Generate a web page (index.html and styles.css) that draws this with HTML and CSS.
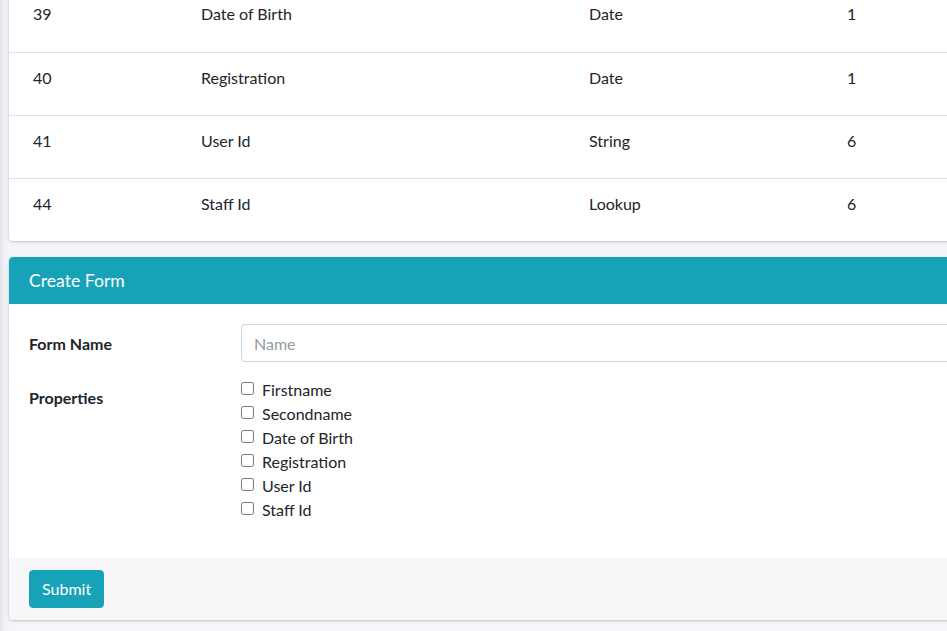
FILE: index.html
```html
<!DOCTYPE html>
<html lang="en">
<head>
<meta charset="utf-8">
<title>Create Form</title>
<link rel="stylesheet" href="styles.css">
</head>
<body>
<div class="content">
  <div class="card table-card">
    <table class="table">
      <tbody>
        <tr><td class="c1">39</td><td class="c2">Date of Birth</td><td class="c3">Date</td><td class="c4">1</td></tr>
        <tr><td class="c1">40</td><td class="c2">Registration</td><td class="c3">Date</td><td class="c4">1</td></tr>
        <tr><td class="c1">41</td><td class="c2">User Id</td><td class="c3">String</td><td class="c4">6</td></tr>
        <tr><td class="c1">44</td><td class="c2">Staff Id</td><td class="c3">Lookup</td><td class="c4">6</td></tr>
      </tbody>
    </table>
  </div>

  <div class="card form-card">
    <div class="card-header"><h3 class="card-title">Create Form</h3></div>
    <form class="form">
      <div class="card-body">
        <div class="form-row">
          <label class="col-label" for="fname">Form Name</label>
          <div class="col-field">
            <input id="fname" class="form-control" type="text" placeholder="Name">
          </div>
        </div>
        <div class="form-row">
          <div class="col-label props">Properties</div>
          <div class="col-field checks">
            <label class="check"><input type="checkbox"> Firstname</label>
            <label class="check"><input type="checkbox"> Secondname</label>
            <label class="check"><input type="checkbox"> Date of Birth</label>
            <label class="check"><input type="checkbox"> Registration</label>
            <label class="check"><input type="checkbox"> User Id</label>
            <label class="check"><input type="checkbox"> Staff Id</label>
          </div>
        </div>
      </div>
      <div class="card-footer">
        <button type="button" class="btn">Submit</button>
      </div>
    </form>
  </div>
</div>
</body>
</html>
```

FILE: styles.css
```css
* { box-sizing: border-box; }
html, body { height: 100%; }
body {
  margin: 0;
  background: linear-gradient(to right, #e2e4e8 0px, #eef0f3 4px, #f4f6f9 9px) #f4f6f9;
  font-family: "Lato", "Liberation Sans", sans-serif;
  font-size: 16px;
  line-height: 24px;
  color: #212529;
  overflow: hidden;
}
.content {
  padding-left: 9px;
  margin-top: -11px;
  width: 1120px;
}
.card {
  background: #fff;
  border-radius: 4px;
  box-shadow: 0 0 1px rgba(0,0,0,.125), 0 1px 3px rgba(0,0,0,.2);
}
.table-card { margin-bottom: 16px; }
.table {
  width: 100%;
  border-collapse: collapse;
}
.table tr { height: 63px; }
.table tr + tr td { border-top: 1px solid #dee2e6; }
.table td {
  vertical-align: top;
  padding: 13px 12px 0;
}
.c1 { width: 180px; padding-left: 24px !important; }
.c2 { width: 388px; }
.c3 { width: 258px; }

.form-card { overflow: hidden; }
.card-header {
  background: #17a2b8;
  color: #fff;
  height: 47px;
  padding: 0 20px;
  display: flex;
  align-items: center;
  border-radius: 4px 4px 0 0;
}
.card-title {
  margin: 0;
  font-size: 17.6px;
  font-weight: 400;
  line-height: 1;
}
.card-body { padding: 20px; }
.form-row {
  display: flex;
  margin-bottom: 16px;
}
.col-label {
  width: 212px;
  flex: none;
  font-weight: 700;
  padding-top: 8px;
  padding-bottom: 7px;
}
.col-label.props { padding-top: 7px; }
.col-field { flex: 1; }
.form-control {
  display: block;
  width: 100%;
  height: 38px;
  padding: 6px 12px;
  font: inherit;
  color: #495057;
  border: 1px solid #ced4da;
  border-radius: 4px;
  background: #fff;
}
.form-control::placeholder { color: #939ba2; }
.checks {
  display: flex;
  flex-direction: column;
  margin-top: -1px;
}
.check {
  display: flex;
  align-items: center;
  height: 24px;
  color: #212529;
}
.check input {
  margin: 0 8px 0 0;
  width: 13px;
  height: 13px;
  position: relative;
  top: -2px;
}
.card-footer {
  background: #f7f7f7;
  padding: 12px 20px;
  border-radius: 0 0 4px 4px;
}
.btn {
  background: #17a2b8;
  color: #fff;
  border: 1px solid #17a2b8;
  border-radius: 4px;
  height: 38px;
  padding: 0 12px;
  font: inherit;
  cursor: pointer;
}
```
